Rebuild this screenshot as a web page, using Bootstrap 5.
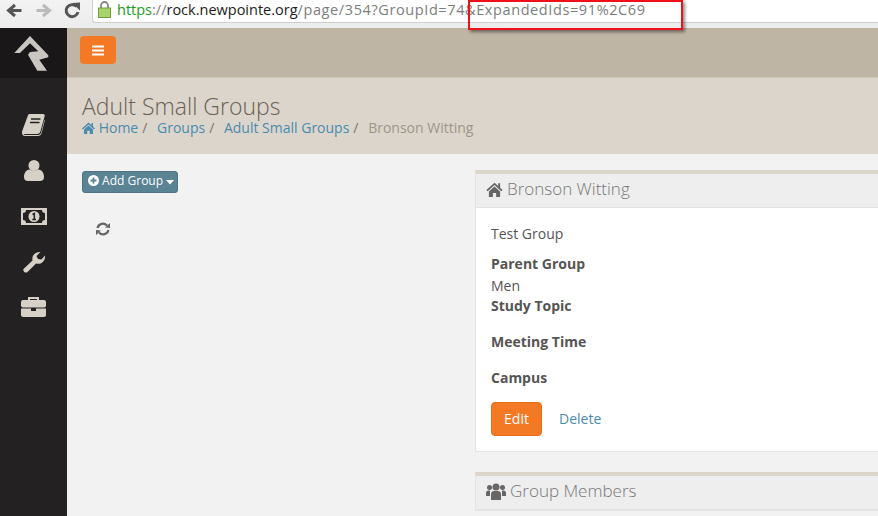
<!DOCTYPE html>
<html lang="en">
<head>
    <meta charset="UTF-8">
    <meta name="viewport" content="width=device-width, initial-scale=1.0">
    <title>Adult Small Groups</title>
    <link href="https://cdn.jsdelivr.net/npm/bootstrap@5.3.0/dist/css/bootstrap.min.css" rel="stylesheet">
    <style>
        html, body { height: 516px; overflow: hidden; }
        body { font-family: "Open Sans", sans-serif; font-size: 14px; color: #555; background: #f2f2f2; position: relative; }

        /* browser chrome */
        .chrome-bar { height: 28px; background: linear-gradient(#f3f3f3, #ececec); }
        .chrome-btns { width: 92px; flex: none; }
        .url-box { height: 23px; background: #fff; border: 1px solid #cfcfcf; border-top: 0; border-right: 0; border-radius: 0 0 0 3px; font-family: "Open Sans", sans-serif; font-size: 14.5px; color: #7d7d7d; padding-left: 5px; line-height: 20px; white-space: nowrap; }
        .url-box b { font-weight: 400; color: #1a9c1a; }
        .url-host { color: #222; }
        .url-tail { letter-spacing: .6px; }
        .url-lock { flex: none; margin-right: 6px; }
        .red-note { position: absolute; left: 468px; top: 0; width: 215px; height: 30px; border: 2px solid #f0101a; box-shadow: 2px 2px 3px rgba(0,0,0,.45); }

        /* rock shell */
        .shell { height: 488px; }
        .side-nav { width: 67px; flex: none; background: #232122; }
        .side-logo { height: 50px; background: #191718; }
        .side-icons { padding-top: 36px; gap: 24px; }
        .side-icons svg { display: block; }
        .icon-gap { margin-top: 3px; }
        .top-strip { height: 50px; background: #bfb5a5; border-bottom: 1px solid #cfc7ba; padding: 8px 13px; }
        .menu-btn { width: 36px; height: 28px; background: #f47924; border-radius: 4px; }
        .page-head { height: 76px; background: #dcd5cb; padding: 15px 15px 0; }
        .page-head h1 { font-size: 23px; font-weight: 300; color: #6a6157; line-height: 26px; margin: 0; }
        .crumbs { font-size: 14px; line-height: 17px; }
        .crumbs a, .del-link { color: #4a8bb0; text-decoration: none; }
        .crumbs i { font-style: normal; color: #7d766c; margin: 0 6px 0 4px; }
        .crumbs-text { color: #9c958a; }
        .home-glyph { vertical-align: -1px; }

        .main-area { padding: 16px 0 0 15px; min-width: 0; }
        .tree-col { width: 393px; flex: none; }
        .add-btn { background: #5a8394; color: #fff; border: 1px solid #4d7384; border-radius: 3px; font-size: 12px; height: 22px; line-height: 18px; padding: 0 3px 2px 5px; }
        .add-plus { vertical-align: -1px; }
        .spin-icon { margin: 29px 0 0 13px; }
        .info-col { width: 430px; flex: none; }
        .rock-panel { background: #fff; border: 1px solid #e4e4e4; border-top: 4px solid #dcd5cb; margin-bottom: 20px; }
        .rock-panel-head { height: 34px; background: #eee; border-bottom: 1px solid #e2e2e2; padding: 0 10px 3px; font-size: 17px; font-weight: 300; color: #777; gap: 4px; }
        .rock-panel-body { padding: 17px 15px 0; height: 243px; font-size: 14px; line-height: 20px; }
        .rock-panel-body p { margin: -1px 0 10px; }
        .rock-panel-body h6 { font-size: 14px; font-weight: 700; line-height: 20px; margin: 0; color: #555; }
        .rock-panel-body h6.spaced { margin-top: 16px; }
        .men-line { margin-top: 2px; }
        .panel-actions { margin-top: 14px; gap: 17px; }
        .edit-btn { background: #f47924; border: 1px solid #e56c18; color: #fff; width: 51px; height: 34px; border-radius: 4px; font-size: 14px; line-height: 32px; padding: 0; }
    </style>
</head>
<body>
    <!-- browser bar -->
    <div class="chrome-bar d-flex align-items-start">
        <svg class="chrome-btns" width="92" height="24" viewBox="0 0 92 24">
            <path d="M21.500 10.500H10M15 5L8.500 10.500L15 16" fill="none" stroke="#555" stroke-width="3"/>
            <path d="M36.500 10.500H48M43 5L49.500 10.500L43 16" fill="none" stroke="#bbb" stroke-width="3"/>
            <path d="M76.500 6.500A6 6 0 1 0 78 12" fill="none" stroke="#555" stroke-width="3"/>
            <path d="M72 3L80 2.500L80 10.500Z" fill="#555"/>
        </svg>
        <div class="url-box flex-grow-1 d-flex">
            <svg class="url-lock" width="13" height="19" viewBox="0 0 13 19">
                <path d="M3 8V5.500a3.500 3.500 0 0 1 7 0V8" fill="none" stroke="#888" stroke-width="1.800"/>
                <rect x="0.500" y="8" width="12" height="9.500" fill="#a6d46a" stroke="#6f9c3c"/>
            </svg>
            <div><b>https</b>://<span class="url-host">rock.newpointe.org</span><span class="url-tail">/page/354?GroupId=74&amp;ExpandedIds=91%2C69</span></div>
        </div>
    </div>

    <div class="shell d-flex">
        <!-- sidebar -->
        <nav class="side-nav d-flex flex-column">
            <div class="side-logo">
                <svg class="d-block" width="67" height="50" viewBox="0 0 67 50">
                    <path d="M30 8L14.300 25H20L30 15.300L38.300 23.300L30 24L28 26.700L37.300 42.700H47L39.300 31.700L48.300 29.300V27.300Z" fill="#c9c5c1"/>
                </svg>
            </div>
            <div class="side-icons d-flex flex-column align-items-center">
                <svg width="23" height="22" viewBox="0 0 23 22"><path d="M6 1.200C6.300 .4 7 0 8 0H21C22.500 0 23 1 22.700 2L18.500 17C18 19 17 20 15 20H3C1.500 20 1 21 3 21H15.500C17 21 18 20.500 19 19L22.500 5.500L22.800 6.500L19.500 19.500C19 21 17.500 22 16 22H3C1 22 0 20.500 0 18.500C0 18 0 17.500 .2 17Z" fill="#d6d0c7"/><path d="M9 5H18.500M8 8.500H17.500" stroke="#232122" stroke-width="1.500"/></svg>
                <svg width="20" height="21" viewBox="0 0 20 21"><circle cx="10" cy="5.500" r="5.500" fill="#d6d0c7"/><path d="M0 17C0 13 2 10 5.500 9.500C7 11 13 11 14.500 9.500C18 10 20 13 20 17C20 20 18 21 16 21H4C2 21 0 20 0 17Z" fill="#d6d0c7"/></svg>
                <svg class="icon-gap" width="26" height="17" viewBox="0 0 26 17"><rect width="26" height="17" fill="#d6d0c7"/><path d="M5 2H21C21 4 22 5 24 5V12C22 12 21 13 21 15H5C5 13 4 12 2 12V5C4 5 5 4 5 2Z" fill="#232122"/><circle cx="13" cy="8.500" r="5.500" fill="#d6d0c7"/><path d="M11.500 6.500L13.300 5.500V11.500M11.300 11.500H15" stroke="#232122" stroke-width="1.500" fill="none"/></svg>
                <svg class="icon-gap" width="22" height="21" viewBox="0 0 22 21"><path d="M.5 17L9.500 8.500C8.500 3.500 12 0 17.500 0L13.500 4L15 7L18.500 7.500L22 3.500C22.500 9 18 13 13 11.500L4.500 20C3 21.500 -.5 19.500 .5 17Z" fill="#d6d0c7"/></svg>
                <svg width="25" height="20" viewBox="0 0 25 20"><path d="M8 4V1H17V4" fill="none" stroke="#d6d0c7" stroke-width="2"/><rect y="3" width="25" height="7.500" rx="2" fill="#d6d0c7"/><path d="M0 11.500H10V14H15V11.500H25V18C25 19 24 20 23 20H2C1 20 0 19 0 18Z" fill="#d6d0c7"/></svg>
            </div>
        </nav>

        <div class="flex-grow-1 overflow-hidden">
            <div class="top-strip">
                <button class="menu-btn btn p-0 border-0 d-flex align-items-center justify-content-center" type="button" aria-label="Toggle navigation">
                    <svg width="14" height="11" viewBox="0 0 14 11"><path d="M1 1.500H13M1 5.500H13M1 9.500H13" stroke="#fff" stroke-width="2"/></svg>
                </button>
            </div>
            <div class="page-head">
                <h1>Adult Small Groups</h1>
                <div class="crumbs">
                    <a href="#"><svg class="home-glyph" width="13" height="12" viewBox="0 0 13 12" fill="#4a8bb0"><path d="M6.500 .5L9.500 3.200V1H11V4.600L13 6.400L12 7.400L6.500 2.400L1 7.400L0 6.400ZM2 7.600L6.500 3.600L11 7.600V12H7.800V8.800H5.200V12H2Z"/></svg> Home</a><i>/</i>
                    <a href="#">Groups</a><i>/</i>
                    <a href="#">Adult Small Groups</a><i>/</i>
                    <span class="crumbs-text">Bronson Witting</span>
                </div>
            </div>
            <div class="main-area d-flex">
                <div class="tree-col">
                    <button class="add-btn btn" type="button"><svg class="add-plus" width="11" height="11" viewBox="0 0 11 11"><circle cx="5.500" cy="5.500" r="5.500" fill="#fff"/><path d="M5.500 2.500V8.500M2.500 5.500H8.500" stroke="#5a8394" stroke-width="1.800"/></svg> Add Group <svg class="align-middle" width="8" height="5" viewBox="0 0 8 5"><path d="M0 0H8L4 4.500Z" fill="#fff"/></svg></button>
                    <div class="spin-icon">
                        <svg class="d-block" width="16" height="14" viewBox="0 0 16 14"><path d="M2.500 6A5.500 5.500 0 0 1 12 3.500M13.500 8A5.500 5.500 0 0 1 4 10.500" fill="none" stroke="#666" stroke-width="2.200"/><path d="M10 5.500L15 6V1ZM6 8.500L1 8V13Z" fill="#666"/></svg>
                    </div>
                </div>
                <div class="info-col">
                    <div class="rock-panel">
                        <div class="rock-panel-head d-flex align-items-center">
                            <svg width="17" height="15" viewBox="0 0 13 12" fill="#666"><path d="M6.500 .5L9.500 3.200V1H11V4.600L13 6.400L12 7.400L6.500 2.400L1 7.400L0 6.400ZM2 7.600L6.500 3.600L11 7.600V12H7.800V8.800H5.200V12H2Z"/></svg>
                            <span>Bronson Witting</span>
                        </div>
                        <div class="rock-panel-body">
                            <p>Test Group</p>
                            <h6>Parent Group</h6>
                            <div class="men-line">Men</div>
                            <h6>Study Topic</h6>
                            <h6 class="spaced">Meeting Time</h6>
                            <h6 class="spaced">Campus</h6>
                            <div class="panel-actions d-flex align-items-center">
                                <button class="edit-btn btn" type="button">Edit</button>
                                <a class="del-link" href="#">Delete</a>
                            </div>
                        </div>
                    </div>
                    <div class="rock-panel">
                        <div class="rock-panel-head d-flex align-items-center">
                            <svg width="20" height="17" viewBox="0 0 20 17" fill="#666"><circle cx="10" cy="4" r="3.500"/><circle cx="3.500" cy="4.500" r="2.500"/><circle cx="16.500" cy="4.500" r="2.500"/><path d="M5 17V11C5 9 6.500 8 8 8H12C13.500 8 15 9 15 11V17Z"/><path d="M0 13V10C0 8.500 1 7.500 2.500 7.500H4V13ZM20 13V10C20 8.500 19 7.500 17.500 7.500H16V13Z"/></svg>
                            <span>Group Members</span>
                        </div>
                    </div>
                </div>
            </div>
        </div>
    </div>

    <div class="red-note"></div>

    <script src="https://cdn.jsdelivr.net/npm/bootstrap@5.3.0/dist/js/bootstrap.bundle.min.js"></script>
</body>
</html>
